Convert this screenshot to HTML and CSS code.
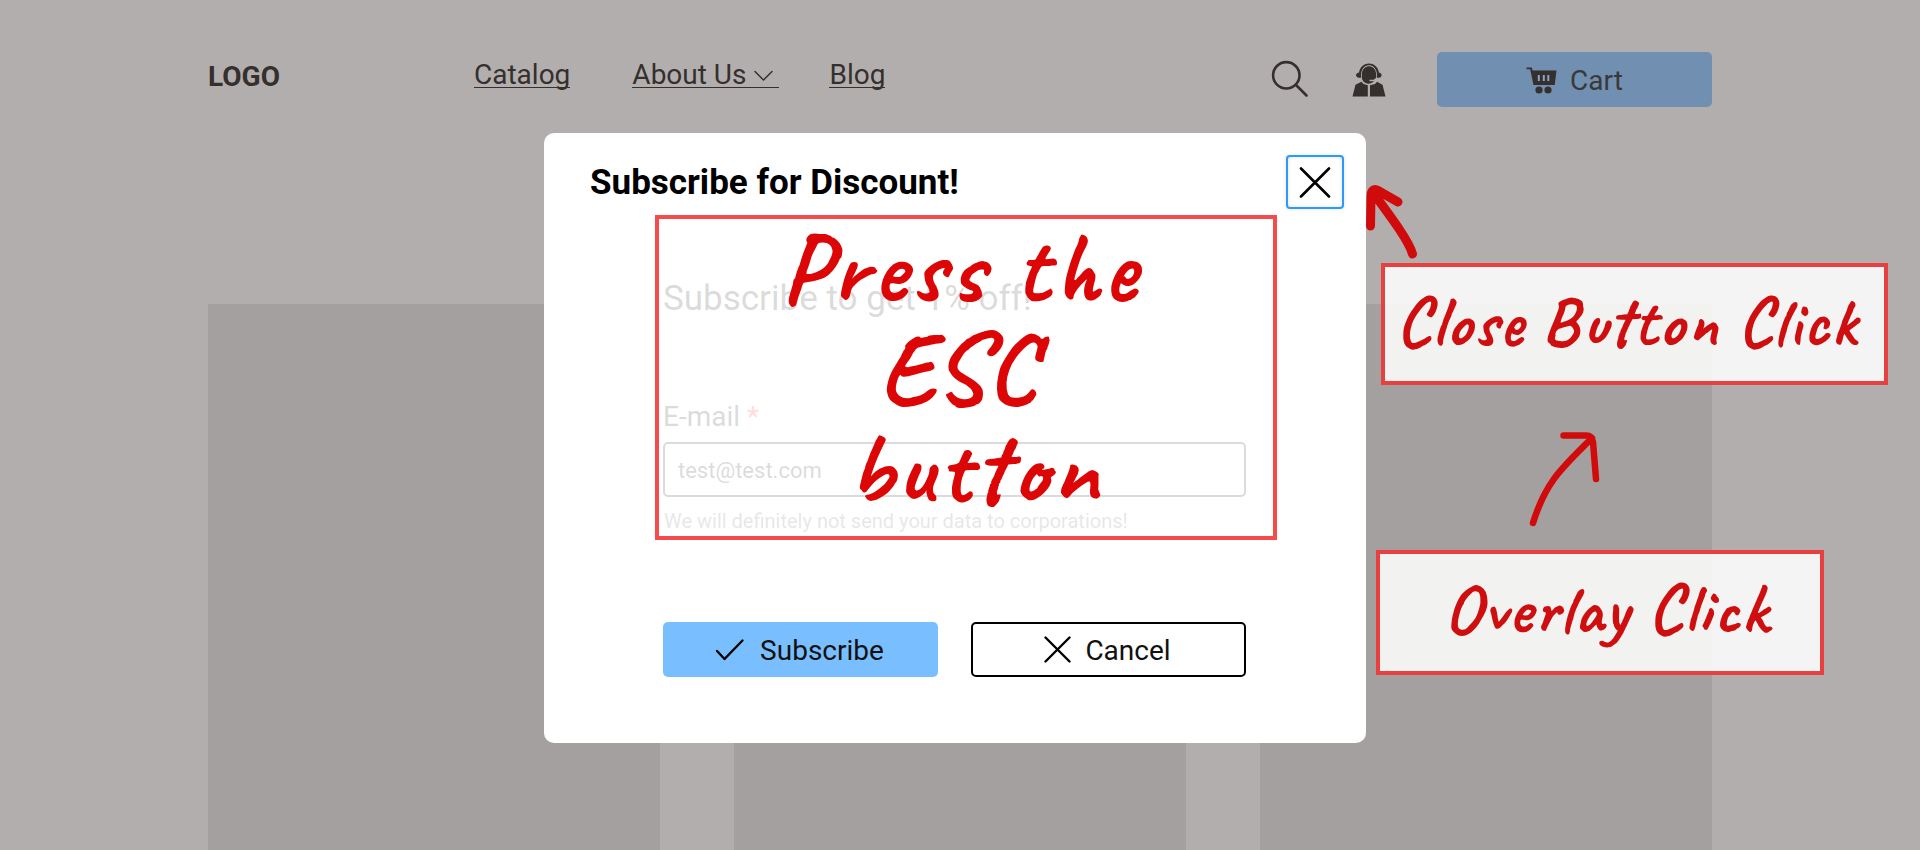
FILE: index.html
```html
<!DOCTYPE html>
<html lang="en">
<head>
<meta charset="utf-8">
<title>Subscribe for Discount</title>
<link rel="stylesheet" href="styles.css">
</head>
<body>
<div class="page">
  <header class="header">
    <div class="logo">LOGO</div>
    <nav class="nav">
      <a class="link">Catalog</a>
      <a class="link">About Us<svg class="chevron" width="33" height="14" viewBox="0 0 33 14"><path d="M9 2.500l8.500 8.500 8.500-8.500" fill="none" stroke="currentColor" stroke-width="1.500" stroke-linecap="round" stroke-linejoin="round"/></svg></a>
      <a class="link link-blog">Blog</a>
    </nav>
    <div class="tools">
      <svg class="search" width="38" height="38" viewBox="0 0 38 38"><g fill="none" stroke="currentColor" stroke-width="2.600" stroke-linecap="round"><circle cx="15.300" cy="15.300" r="13.200"/><path d="M25 25l10.500 10.500"/></g></svg>
      <svg class="support" width="34" height="34" viewBox="0 0 34 34" fill="currentColor"><path d="M7 9.500C9-2.500 25-2.500 27 9.500c3.500.8 3.500 5 0 5.300h-2.200V10c-1.500-10.500-14.100-10.500-15.600 0v4.800H7c-4-.3-4-4.500 0-5.300z"/><path d="M10 10c1-9 13-9 14 0v5l-2.500 1.700H17.500v1.500h4.700C18 22 12 21.500 10 16z"/><path d="M.5 33.500l3-11.700 6-3.100 2 2.300 4.300 1.300v11.200zM33.500 33.500l-3-11.700-5.500-3.100-2 2.300-5 1.300v11.200z"/></svg>
      <div class="cart">
        <svg width="31" height="27" viewBox="0 0 31 27"><path fill="currentColor" d="M.5.500h5.300l.8 3H30.500l-1.800 14.500H7.500L4.200 2.300H.5z"/><g fill="currentColor"><circle cx="13" cy="23" r="3.600"/><circle cx="22" cy="23" r="3.600"/></g><path d="M12.800 8v6M17.800 8v6M22.300 8v6" stroke="#8aa5c0" stroke-width="2"/></svg>
        <span>Cart</span>
      </div>
    </div>
  </header>
  <main class="cards"><div class="card"></div><div class="card"></div><div class="card"></div></main>

  <section class="modal">
    <div class="modal-head">
      <h1 class="title">Subscribe for Discount!</h1>
      <button class="close"><svg width="32" height="32" viewBox="0 0 32 32"><path d="M2 2.500l28 28M30 2.500L2 30.500" stroke="#000" stroke-width="2.600" stroke-linecap="round"/></svg></button>
    </div>
    <div class="form">
      <p class="lead">Subscribe to get 1% off!</p>
      <p class="label">E-mail <span class="star">*</span></p>
      <div class="input">test@test.com</div>
      <p class="hint">We will definitely not send your data to corporations!</p>
      <div class="actions">
        <div class="btn primary"><svg width="30" height="24" viewBox="0 0 30 24"><path d="M2 13l7.500 8L27.500 2.500" fill="none" stroke="#000" stroke-width="2.400" stroke-linecap="round" stroke-linejoin="round"/></svg><span>Subscribe</span></div>
        <div class="btn outline"><svg width="27" height="27" viewBox="0 0 27 27"><path d="M1.500 1.500l24 24M25.500 1.500l-24 24" stroke="#000" stroke-width="2.400" stroke-linecap="round"/></svg><span>Cancel</span></div>
      </div>
    </div>
  </section>

  <div class="note note-esc">
    <svg class="hand" width="614" height="317" viewBox="659 219 614 317">
      <text x="781" y="301" textLength="355">Press the</text>
      <text x="879" y="402" font-size="102" textLength="157">ESC</text>
      <text x="848" y="501" textLength="250">button</text>
    </svg>
  </div>
  <div class="note note-close">
    <svg class="hand" width="499" height="114" viewBox="1385 267 499 114">
      <text x="1396" y="345" textLength="460">Close Button Click</text>
    </svg>
  </div>
  <div class="note note-overlay">
    <svg class="hand" width="440" height="117" viewBox="1380 554 440 117">
      <text x="1444" y="632" textLength="323">Overlay Click</text>
    </svg>
  </div>
  <svg class="arrow arrow-close" width="60" height="82" viewBox="1362 180 60 82"><path d="M1412.500 254C1409 241 1391 217 1374 194M1370.500 226L1371 197Q1371 188 1377 190L1398 202" stroke-width="9"/></svg>
  <svg class="arrow arrow-overlay" width="80" height="104" viewBox="1525 427 80 104"><path d="M1533 523C1546 481 1562 468 1592 438M1563.500 435.500H1586Q1592 435.500 1593 442L1596 479" stroke-width="6.500"/></svg>
</div>
</body>
</html>
```
FILE: styles.css
```css
* { box-sizing: border-box; }
body { margin: 0; font-family: Roboto, "Liberation Sans", sans-serif; }
p, h1 { margin: 0; font-weight: 400; }
svg { display: block; flex: none; }

.page { position: relative; width: 1920px; height: 850px; overflow: hidden; background: #b2aead; color: #352f2d; }
.header { display: flex; height: 304px; padding: 52px 208px 0; align-items: flex-start; font-size: 28px; line-height: 33px; }
.logo { width: 266px; padding-top: 8px; font-weight: 700; }
.nav { display: flex; gap: 62px; padding-top: 7px; }
.link { display: flex; height: 29px; align-items: center; padding-top: 2px; border-bottom: 1px solid #352f2d; }
.link-blog { margin-left: -12px; }
.chevron { margin-top: 3px; }
.tools { display: flex; margin-left: auto; }
.search { margin: 8px 43px 0 0; }
.support { margin: 11px 51px 0 0; }
.cart { display: flex; width: 275px; height: 55px; align-items: center; justify-content: center; gap: 13px; padding-top: 2px; border-radius: 5px; background: #718fb0; }
.cart span { color: #393939; }

.cards { display: grid; grid-template-columns: repeat(3, 452px); gap: 74px; height: 546px; padding: 0 208px; }
.card { background: #a4a09f; }

.modal { position: absolute; left: 544px; top: 133px; width: 822px; height: 610px; border-radius: 10px; background: #fff; color: #000; }
.modal-head { display: flex; justify-content: space-between; padding: 22px 22px 0 46px; }
.title { padding-top: 7px; font-size: 35px; line-height: 41px; font-weight: 700; }
.close { display: flex; width: 58px; height: 54px; align-items: center; justify-content: center; padding: 0; border: 2px solid #2b99ff; border-radius: 4px; background: #fff; box-shadow: 0 0 4px rgba(0, 0, 0, .12), inset 0 0 4px rgba(0, 0, 0, .12); }
.form { padding: 69px 120px 0 119px; }
.lead { font-size: 35px; line-height: 41px; }
.label { padding-top: 81px; font-size: 28px; line-height: 33px; }
.star { color: #f00; }
.input { height: 55px; margin-top: 9px; padding: 0 13px; border: 2px solid #000; border-radius: 5px; font-size: 22px; line-height: 53px; }
.hint { padding: 12px 0 0 1px; color: #555; font-size: 20px; line-height: 24px; }
.actions { display: flex; justify-content: space-between; margin-top: 89px; }
.btn { display: flex; width: 275px; height: 55px; align-items: center; justify-content: center; gap: 15px; padding-right: 2px; border-radius: 5px; font-size: 28px; line-height: 33px; color: #111; }
.btn span { padding-top: 2px; }
.primary { background: #79bfff; }
.outline { gap: 14px; border: 2px solid #000; }

.note { position: absolute; border: 4px solid #e83f3f; background: rgba(255, 255, 255, .86); background-clip: padding-box; }
.note-esc { left: 655px; top: 215px; width: 622px; height: 325px; border-color: #f54b4b; }
.note-close { left: 1381px; top: 263px; width: 507px; height: 122px; }
.note-overlay { left: 1376px; top: 550px; width: 448px; height: 125px; }
.hand { font-family: Caveat, "Open Sans", sans-serif; font-size: 70px; font-weight: 700; fill: #cf0e10; }
.note-esc .hand { font-size: 100px; fill: #dd0606; }
.arrow { position: absolute; fill: none; stroke: #d10a0b; stroke-linecap: round; stroke-linejoin: round; }
.arrow-close { left: 1362px; top: 180px; }
.arrow-overlay { left: 1525px; top: 427px; }
```
